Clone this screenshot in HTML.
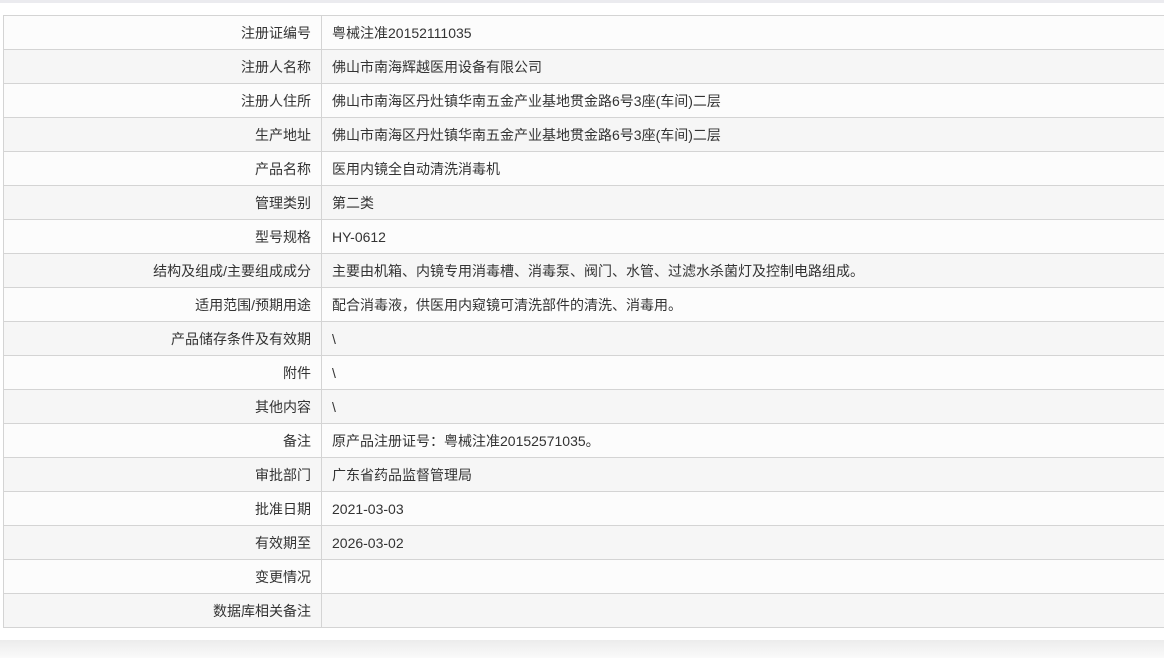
<!DOCTYPE html>
<html><head><meta charset="utf-8"><style>
html,body{margin:0;padding:0;background:#fff;width:1164px;height:658px;overflow:hidden;font-family:"Liberation Sans","Noto Sans CJK SC",sans-serif;}
.top{position:absolute;left:0;top:0;width:1164px;height:3px;background:#ebebef;}
.bot{position:absolute;left:0;top:640px;width:1164px;height:18px;background:linear-gradient(#ececec,#fafafa);}
table{position:absolute;left:3px;top:15px;width:1180px;border-collapse:collapse;font-size:14px;color:#333;}
td{height:34px;border:1px solid #d4d4d4;padding:0 10px;box-sizing:border-box;}
td.l{width:318px;text-align:right;}
tr:nth-child(odd){background:#fcfcfc;}
tr:nth-child(even){background:#f6f6f6;}
</style></head><body>
<div class="top"></div>
<table>
<tr><td class="l">注册证编号</td><td>粤械注准20152111035</td></tr>
<tr><td class="l">注册人名称</td><td>佛山市南海辉越医用设备有限公司</td></tr>
<tr><td class="l">注册人住所</td><td>佛山市南海区丹灶镇华南五金产业基地贯金路6号3座(车间)二层</td></tr>
<tr><td class="l">生产地址</td><td>佛山市南海区丹灶镇华南五金产业基地贯金路6号3座(车间)二层</td></tr>
<tr><td class="l">产品名称</td><td>医用内镜全自动清洗消毒机</td></tr>
<tr><td class="l">管理类别</td><td>第二类</td></tr>
<tr><td class="l">型号规格</td><td>HY-0612</td></tr>
<tr><td class="l">结构及组成/主要组成成分</td><td>主要由机箱、内镜专用消毒槽、消毒泵、阀门、水管、过滤水杀菌灯及控制电路组成。</td></tr>
<tr><td class="l">适用范围/预期用途</td><td>配合消毒液，供医用内窥镜可清洗部件的清洗、消毒用。</td></tr>
<tr><td class="l">产品储存条件及有效期</td><td>\</td></tr>
<tr><td class="l">附件</td><td>\</td></tr>
<tr><td class="l">其他内容</td><td>\</td></tr>
<tr><td class="l">备注</td><td>原产品注册证号：粤械注准20152571035。</td></tr>
<tr><td class="l">审批部门</td><td>广东省药品监督管理局</td></tr>
<tr><td class="l">批准日期</td><td>2021-03-03</td></tr>
<tr><td class="l">有效期至</td><td>2026-03-02</td></tr>
<tr><td class="l">变更情况</td><td></td></tr>
<tr><td class="l">数据库相关备注</td><td></td></tr>
</table>
<div class="bot"></div>
</body></html>
